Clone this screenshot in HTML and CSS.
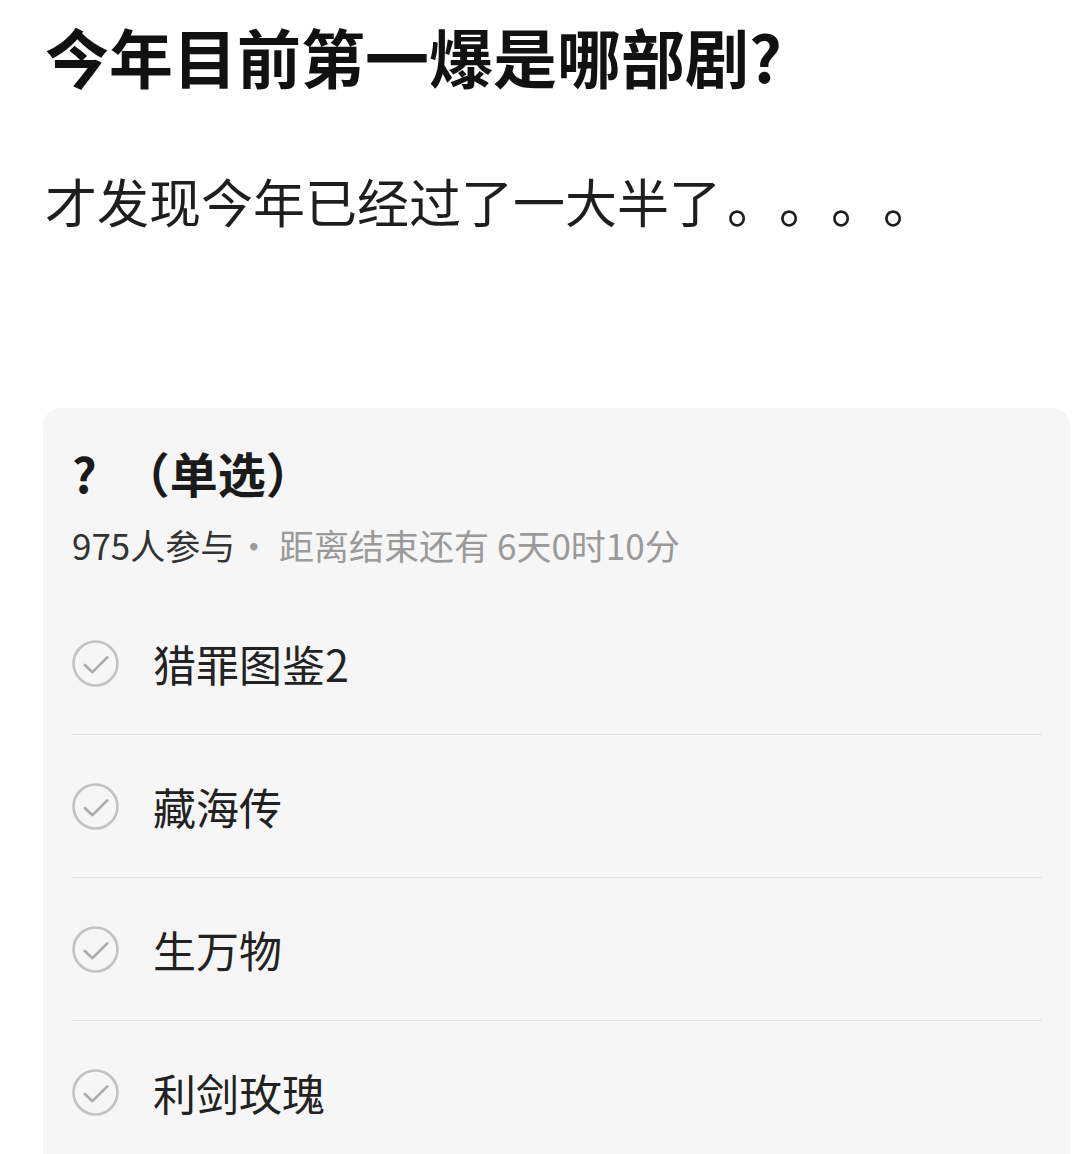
FILE: index.html
```html
<!DOCTYPE html>
<html lang="zh-CN">
<head>
    <meta charset="UTF-8">
    <meta name="viewport" content="width=device-width, initial-scale=1.0">
    <title>今年目前第一爆是哪部剧?</title>
    <link rel="stylesheet" href="styles.css">
</head>
<body>
    <div class="post">
        <h1 class="post-title">今年目前第一爆是哪部剧?</h1>
        <p class="post-text">才发现今年已经过了一大半了<span class="dots">。。。。</span></p>

        <div class="vote">
            <h2 class="vote-title">?<span class="kind">（单选）</span></h2>
            <div class="vote-meta"><span class="count">975人参与</span><span class="rest">· 距离结束还有 6天0时10分</span></div>

            <div class="option">
                <svg class="check" viewBox="0 0 46 46"><circle cx="23" cy="23" r="21.5" /><path d="M12.5 24.5l7.5 7 14.5-14.5" /></svg>
                <span>猎罪图鉴2</span>
            </div>
            <div class="option">
                <svg class="check" viewBox="0 0 46 46"><circle cx="23" cy="23" r="21.5" /><path d="M12.5 24.5l7.5 7 14.5-14.5" /></svg>
                <span>藏海传</span>
            </div>
            <div class="option">
                <svg class="check" viewBox="0 0 46 46"><circle cx="23" cy="23" r="21.5" /><path d="M12.5 24.5l7.5 7 14.5-14.5" /></svg>
                <span>生万物</span>
            </div>
            <div class="option">
                <svg class="check" viewBox="0 0 46 46"><circle cx="23" cy="23" r="21.5" /><path d="M12.5 24.5l7.5 7 14.5-14.5" /></svg>
                <span>利剑玫瑰</span>
            </div>
        </div>
    </div>
</body>
</html>
```

FILE: styles.css
```css
body{
    margin: 0;
    background: #fff;
    font-family: "Noto Sans CJK SC", "Noto Sans", sans-serif;
    color: #1a1a1a;
    overflow: hidden;
}
.post{
    padding: 10px 10px 0 45px;
}
.post-title{
    margin: 0;
    font-size: 64px;
    font-weight: 700;
    line-height: 90px;
    color: #111;
}
.post-text{
    margin: 66px 0 0;
    font-size: 52px;
    line-height: 70px;
    color: #1e1e1e;
}
.post-text .dots{
    letter-spacing: 26px;
    margin-left: 6px;
}
.vote{
    margin: 172px 0 0 -2px;
    background: #f6f6f6;
    border-radius: 18px;
    padding: 35px 28px 0 29px;
    height: 900px;
}
.vote-title{
    margin: 0;
    font-size: 48px;
    font-weight: 700;
    line-height: 58px;
    color: #1a1a1a;
}
.vote-title .kind{
    margin-left: 25px;
}
.vote-meta{
    margin-top: 22px;
    font-size: 35px;
    line-height: 44px;
}
.vote-meta .count{
    color: #333;
}
.vote-meta .rest{
    margin-left: 1px;
    color: #9a9a9a;
}
.option{
    display: flex;
    align-items: center;
    gap: 34px;
    height: 142px;
    border-bottom: 1px solid #e2e2e2;
    font-size: 43px;
    color: #222;
}
.vote-meta + .option{
    margin-top: 25px;
}
.check{
    width: 47px;
    height: 47px;
    flex-shrink: 0;
}
.check circle{
    fill: none;
    stroke: #c2c2c2;
    stroke-width: 2.6;
}
.check path{
    fill: none;
    stroke: #ababab;
    stroke-width: 2.6;
    stroke-linecap: round;
    stroke-linejoin: round;
}
```
